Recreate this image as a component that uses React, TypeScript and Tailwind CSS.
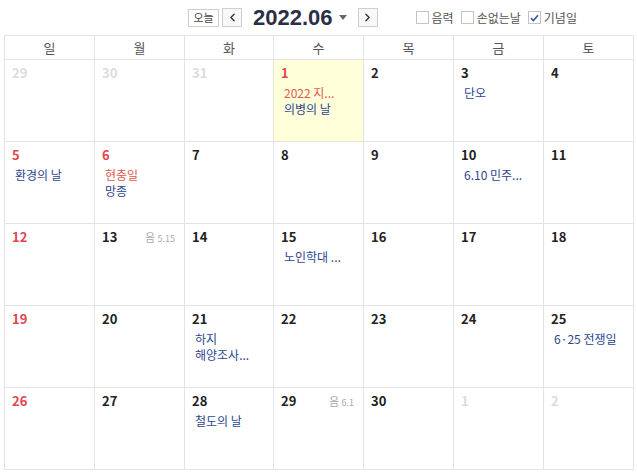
import { ChevronLeft, ChevronRight } from 'lucide-react';

type Ev = { text: string; red?: boolean };
type Day = { n: number; muted?: boolean; today?: boolean; lunar?: string; events?: Ev[] };

const weekdays = ['일', '월', '화', '수', '목', '금', '토'];

const weeks: Day[][] = [
  [
    { n: 29, muted: true },
    { n: 30, muted: true },
    { n: 31, muted: true },
    { n: 1, today: true, events: [{ text: '2022 지...', red: true }, { text: '의병의 날' }] },
    { n: 2 },
    { n: 3, events: [{ text: '단오' }] },
    { n: 4 },
  ],
  [
    { n: 5, events: [{ text: '환경의 날' }] },
    { n: 6, events: [{ text: '현충일', red: true }, { text: '망종' }] },
    { n: 7 },
    { n: 8 },
    { n: 9 },
    { n: 10, events: [{ text: '6.10 민주...' }] },
    { n: 11 },
  ],
  [
    { n: 12 },
    { n: 13, lunar: '5.15' },
    { n: 14 },
    { n: 15, events: [{ text: '노인학대 ...' }] },
    { n: 16 },
    { n: 17 },
    { n: 18 },
  ],
  [
    { n: 19 },
    { n: 20 },
    { n: 21, events: [{ text: '하지' }, { text: '해양조사...' }] },
    { n: 22 },
    { n: 23 },
    { n: 24 },
    { n: 25, events: [{ text: '6·25 전쟁일' }] },
  ],
  [
    { n: 26 },
    { n: 27 },
    { n: 28, events: [{ text: '철도의 날' }] },
    { n: 29, lunar: '6.1' },
    { n: 30 },
    { n: 1, muted: true },
    { n: 2, muted: true },
  ],
];

const font = { fontFamily: '"Noto Sans CJK KR", "Noto Sans", sans-serif' };

const Check = ({ label, checked }: { label: string; checked?: boolean }) => (
  <label className="flex items-center gap-[3px] text-[12px] text-[#555]">
    <span className="flex h-[13px] w-[13px] items-center justify-center border border-[#c4c4c4] bg-white">
      {checked && (
        <svg width="9" height="8" viewBox="0 0 9 8">
          <path d="M1 4.2 L3.4 6.5 L8 1.2" fill="none" stroke="#2d5aa8" strokeWidth="1.6" />
        </svg>
      )}
    </span>
    <span className="leading-none">{label}</span>
  </label>
);

export default function App() {
  return (
    <div className="h-[472px] w-[637px] overflow-hidden bg-white" style={font}>
      <div className="relative flex h-[35px] items-center">
        <div className="ml-[188px] flex items-center">
          <button className="flex h-[18px] w-[31px] items-center justify-center border border-[#cfcfcf] bg-white text-[11px] leading-none text-[#444]">
            오늘
          </button>
          <button className="ml-[3px] flex h-[19px] w-[20px] items-center justify-center border border-[#cfcfcf] bg-[#f8f8f8] text-[#333]">
            <ChevronLeft size={13} strokeWidth={2.6} />
          </button>
          <span
            className="ml-[11px] text-[22px] font-bold leading-none text-[#2b2f45]"
            style={{ fontFamily: '"Liberation Sans", Arial, sans-serif' }}
          >
            2022.06
          </span>
          <svg className="ml-[6px]" width="8" height="5" viewBox="0 0 8 5">
            <path d="M0 0 L8 0 L4 5 Z" fill="#666" />
          </svg>
          <button className="ml-[11px] flex h-[19px] w-[20px] items-center justify-center border border-[#cfcfcf] bg-[#f8f8f8] text-[#333]">
            <ChevronRight size={13} strokeWidth={2.6} />
          </button>
        </div>
        <div className="ml-[38px] flex items-center gap-[7px]">
          <Check label="음력" />
          <Check label="손없는날" />
          <Check label="기념일" checked />
        </div>
      </div>

      <div className="ml-[4px] w-[630px] border-l border-t border-[#e3e3e3]">
        <div className="grid grid-cols-[90px_90px_89px_90px_90px_90px_90px]">
          {weekdays.map((w) => (
            <div
              key={w}
              className="flex h-[24px] items-center justify-center border-b border-r border-[#e3e3e3] text-[13px] text-[#555]"
            >
              {w}
            </div>
          ))}
        </div>
        {weeks.map((week, wi) => (
          <div key={wi} className="grid h-[82px] grid-cols-[90px_90px_89px_90px_90px_90px_90px]">
            {week.map((d, di) => {
              const numColor = d.muted ? 'text-[#dcdcdc]' : di === 0 || (wi === 0 && di === 3) || (wi === 1 && di === 1) ? 'text-[#e2454f]' : 'text-[#222]';
              return (
                <div
                  key={di}
                  className={`border-b border-r border-[#e3e3e3] px-[7px] pt-[4px] ${d.today ? 'bg-[#ffffd9]' : 'bg-white'}`}
                >
                  <div className="flex items-center justify-between">
                    <span className={`text-[13px] font-bold leading-[18px] ${numColor}`}>{d.n}</span>
                    {d.lunar && (
                      <span className="mr-[2px] text-[11px] leading-none text-[#aaa]">
                        음 <span className="text-[9px]">{d.lunar}</span>
                      </span>
                    )}
                  </div>
                  {d.events && (
                    <div className="mt-[3px] pl-[3px]">
                      {d.events.map((e, ei) => (
                        <div
                          key={ei}
                          className={`whitespace-nowrap text-[12px] leading-[16px] ${e.red ? 'text-[#e05a4e]' : 'text-[#2c4690]'}`}
                        >
                          {e.text}
                        </div>
                      ))}
                    </div>
                  )}
                </div>
              );
            })}
          </div>
        ))}
      </div>
    </div>
  );
}
